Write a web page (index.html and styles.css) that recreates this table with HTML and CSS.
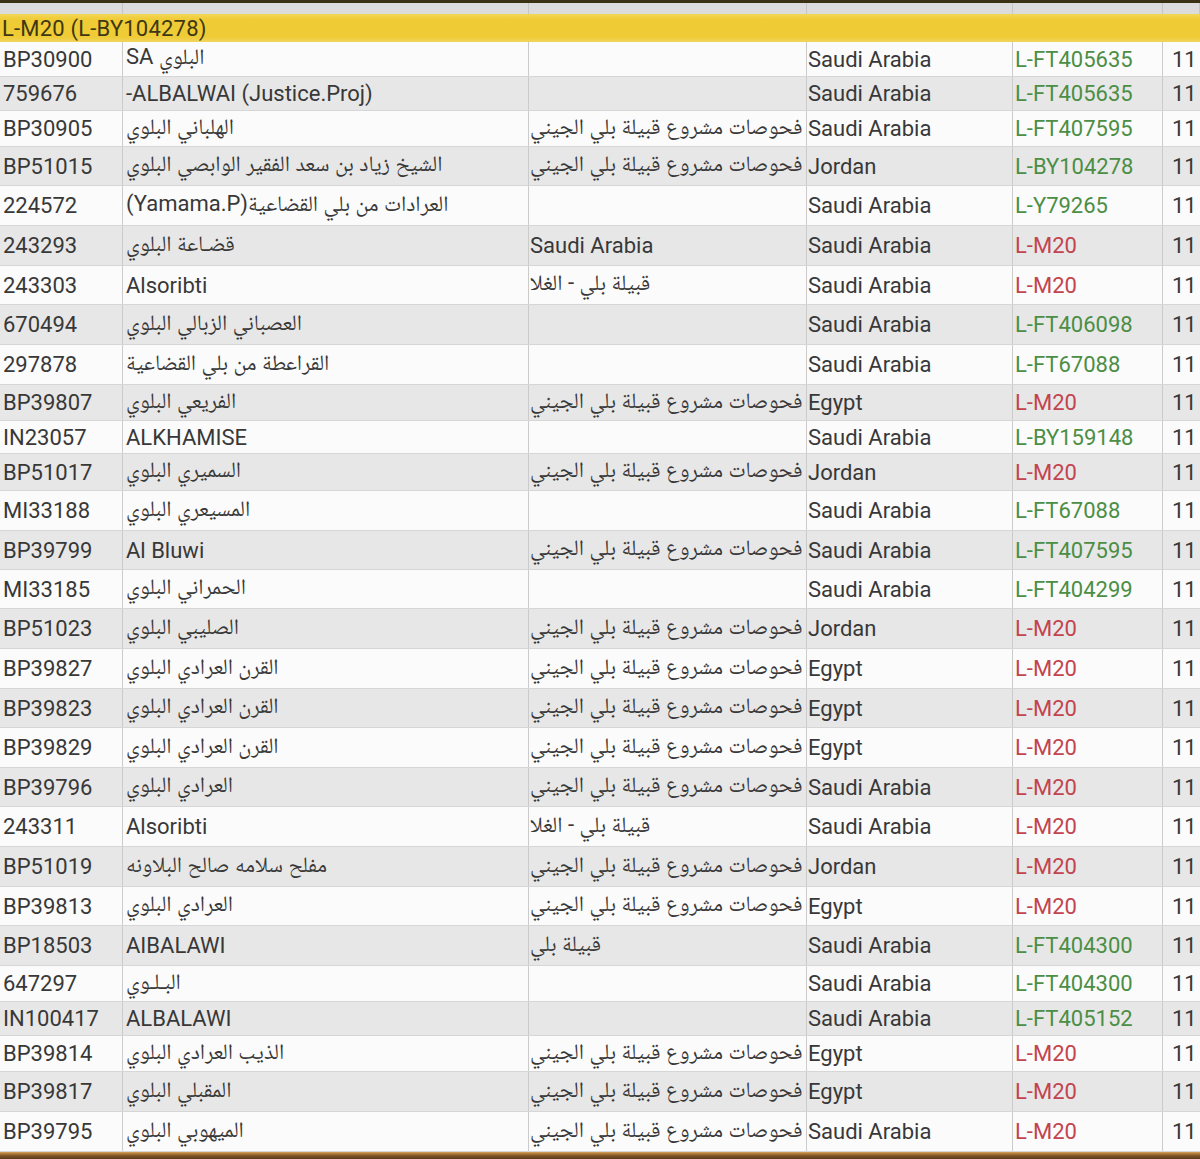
FILE: index.html
```html
<!DOCTYPE html>
<html lang="ar">
<head>
<meta charset="utf-8">
<title>L-M20</title>
<link rel="stylesheet" href="styles.css">
</head>
<body>
<div class="sheet">
  <div class="topbar"></div>
  <div class="grid head"><div class="c"></div><div class="c"></div><div class="c"></div><div class="c"></div><div class="c"></div><div class="c"></div></div>
  <div class="group">L-M20 (L-BY104278)</div>

  <div class="grid row h35"><div class="c id">BP30900</div><div class="c name">SA البلوي</div><div class="c note"></div><div class="c country">Saudi Arabia</div><div class="c hap g">L-FT405635</div><div class="c n">11</div></div>
  <div class="grid row alt h34"><div class="c id">759676</div><div class="c name">-ALBALWAI (Justice.Proj)</div><div class="c note"></div><div class="c country">Saudi Arabia</div><div class="c hap g">L-FT405635</div><div class="c n">11</div></div>
  <div class="grid row h36"><div class="c id">BP30905</div><div class="c name">الهلباني البلوي</div><div class="c note">فحوصات مشروع قبيلة بلي الجيني</div><div class="c country">Saudi Arabia</div><div class="c hap g">L-FT407595</div><div class="c n">11</div></div>
  <div class="grid row alt h39"><div class="c id">BP51015</div><div class="c name">الشيخ زياد بن سعد الفقير الوابصي البلوي</div><div class="c note">فحوصات مشروع قبيلة بلي الجيني</div><div class="c country">Jordan</div><div class="c hap g">L-BY104278</div><div class="c n">11</div></div>
  <div class="grid row"><div class="c id">224572</div><div class="c name">(Yamama.P)العرادات من بلي القضاعية</div><div class="c note"></div><div class="c country">Saudi Arabia</div><div class="c hap g">L-Y79265</div><div class="c n">11</div></div>
  <div class="grid row alt"><div class="c id">243293</div><div class="c name">قضـاعة البلوي</div><div class="c note">Saudi Arabia</div><div class="c country">Saudi Arabia</div><div class="c hap r">L-M20</div><div class="c n">11</div></div>
  <div class="grid row h39"><div class="c id">243303</div><div class="c name">Alsoribti</div><div class="c note">قبيلة بلي - الغلا</div><div class="c country">Saudi Arabia</div><div class="c hap r">L-M20</div><div class="c n">11</div></div>
  <div class="grid row alt"><div class="c id">670494</div><div class="c name">العصباني الزبالي البلوي</div><div class="c note"></div><div class="c country">Saudi Arabia</div><div class="c hap g">L-FT406098</div><div class="c n">11</div></div>
  <div class="grid row"><div class="c id">297878</div><div class="c name">القراعطة من بلي القضاعية</div><div class="c note"></div><div class="c country">Saudi Arabia</div><div class="c hap g">L-FT67088</div><div class="c n">11</div></div>
  <div class="grid row alt h36"><div class="c id">BP39807</div><div class="c name">الفريعي البلوي</div><div class="c note">فحوصات مشروع قبيلة بلي الجيني</div><div class="c country">Egypt</div><div class="c hap r">L-M20</div><div class="c n">11</div></div>
  <div class="grid row h33"><div class="c id">IN23057</div><div class="c name">ALKHAMISE</div><div class="c note"></div><div class="c country">Saudi Arabia</div><div class="c hap g">L-BY159148</div><div class="c n">11</div></div>
  <div class="grid row alt h37"><div class="c id">BP51017</div><div class="c name">السميري البلوي</div><div class="c note">فحوصات مشروع قبيلة بلي الجيني</div><div class="c country">Jordan</div><div class="c hap r">L-M20</div><div class="c n">11</div></div>
  <div class="grid row"><div class="c id">MI33188</div><div class="c name">المسيعري البلوي</div><div class="c note"></div><div class="c country">Saudi Arabia</div><div class="c hap g">L-FT67088</div><div class="c n">11</div></div>
  <div class="grid row alt h39"><div class="c id">BP39799</div><div class="c name">Al Bluwi</div><div class="c note">فحوصات مشروع قبيلة بلي الجيني</div><div class="c country">Saudi Arabia</div><div class="c hap g">L-FT407595</div><div class="c n">11</div></div>
  <div class="grid row h39"><div class="c id">MI33185</div><div class="c name">الحمراني البلوي</div><div class="c note"></div><div class="c country">Saudi Arabia</div><div class="c hap g">L-FT404299</div><div class="c n">11</div></div>
  <div class="grid row alt"><div class="c id">BP51023</div><div class="c name">الصليبي البلوي</div><div class="c note">فحوصات مشروع قبيلة بلي الجيني</div><div class="c country">Jordan</div><div class="c hap r">L-M20</div><div class="c n">11</div></div>
  <div class="grid row"><div class="c id">BP39827</div><div class="c name">القرن العرادي البلوي</div><div class="c note">فحوصات مشروع قبيلة بلي الجيني</div><div class="c country">Egypt</div><div class="c hap r">L-M20</div><div class="c n">11</div></div>
  <div class="grid row alt h39"><div class="c id">BP39823</div><div class="c name">القرن العرادي البلوي</div><div class="c note">فحوصات مشروع قبيلة بلي الجيني</div><div class="c country">Egypt</div><div class="c hap r">L-M20</div><div class="c n">11</div></div>
  <div class="grid row"><div class="c id">BP39829</div><div class="c name">القرن العرادي البلوي</div><div class="c note">فحوصات مشروع قبيلة بلي الجيني</div><div class="c country">Egypt</div><div class="c hap r">L-M20</div><div class="c n">11</div></div>
  <div class="grid row alt h39"><div class="c id">BP39796</div><div class="c name">العرادي البلوي</div><div class="c note">فحوصات مشروع قبيلة بلي الجيني</div><div class="c country">Saudi Arabia</div><div class="c hap r">L-M20</div><div class="c n">11</div></div>
  <div class="grid row"><div class="c id">243311</div><div class="c name">Alsoribti</div><div class="c note">قبيلة بلي - الغلا</div><div class="c country">Saudi Arabia</div><div class="c hap r">L-M20</div><div class="c n">11</div></div>
  <div class="grid row alt"><div class="c id">BP51019</div><div class="c name">مفلح سلامه صالح البلاونه</div><div class="c note">فحوصات مشروع قبيلة بلي الجيني</div><div class="c country">Jordan</div><div class="c hap r">L-M20</div><div class="c n">11</div></div>
  <div class="grid row h39"><div class="c id">BP39813</div><div class="c name">العرادي البلوي</div><div class="c note">فحوصات مشروع قبيلة بلي الجيني</div><div class="c country">Egypt</div><div class="c hap r">L-M20</div><div class="c n">11</div></div>
  <div class="grid row alt"><div class="c id">BP18503</div><div class="c name">AIBALAWI</div><div class="c note">قبيلة بلي</div><div class="c country">Saudi Arabia</div><div class="c hap g">L-FT404300</div><div class="c n">11</div></div>
  <div class="grid row h36"><div class="c id">647297</div><div class="c name">البـلـوي</div><div class="c note"></div><div class="c country">Saudi Arabia</div><div class="c hap g">L-FT404300</div><div class="c n">11</div></div>
  <div class="grid row alt h34"><div class="c id">IN100417</div><div class="c name">ALBALAWI</div><div class="c note"></div><div class="c country">Saudi Arabia</div><div class="c hap g">L-FT405152</div><div class="c n">11</div></div>
  <div class="grid row h36"><div class="c id">BP39814</div><div class="c name">الذيب العرادي البلوي</div><div class="c note">فحوصات مشروع قبيلة بلي الجيني</div><div class="c country">Egypt</div><div class="c hap r">L-M20</div><div class="c n">11</div></div>
  <div class="grid row alt"><div class="c id">BP39817</div><div class="c name">المقبلي البلوي</div><div class="c note">فحوصات مشروع قبيلة بلي الجيني</div><div class="c country">Egypt</div><div class="c hap r">L-M20</div><div class="c n">11</div></div>
  <div class="grid row"><div class="c id">BP39795</div><div class="c name">الميهوبي البلوي</div><div class="c note">فحوصات مشروع قبيلة بلي الجيني</div><div class="c country">Saudi Arabia</div><div class="c hap r">L-M20</div><div class="c n">11</div></div>

  <div class="bottombar"></div>
</div>
</body>
</html>
```

FILE: styles.css
```css
html, body {
  margin: 0;
  padding: 0;
  background: #ffffff;
}

.sheet {
  width: 1200px;
  height: 1159px;
  overflow: hidden;
  display: flex;
  flex-direction: column;
  font-family: Roboto, "Noto Naskh Arabic", "Noto Sans Arabic", "DejaVu Sans", sans-serif;
  font-size: 22px;
  color: #383838;
  direction: ltr;
}

.topbar {
  height: 3px;
  flex: none;
  background: #3a3114;
}

.grid {
  display: grid;
  grid-template-columns: 123px 406px 278px 206px 150px 37px;
  box-sizing: border-box;
  flex: none;
}

.head {
  height: 11px;
  background: #dcdcdc;
}

.head .c {
  border-right: 1px solid #c6c6c6;
}

.group {
  height: 28px;
  flex: none;
  box-sizing: border-box;
  padding-left: 2px;
  display: flex;
  align-items: center;
  background: linear-gradient(#f1d75a 0%, #efcb36 18%, #efcb36 82%, #f1d560 100%);
  color: #3e3713;
  letter-spacing: 0.2px;
}

.row {
  height: 40px;
  background: #fbfbfb;
  border-bottom: 1px solid #d6d6d6;
}

.row.alt {
  background: #e7e7e7;
}

.row.h33 { height: 33px; }
.row.h34 { height: 34px; }
.row.h35 { height: 35px; }
.row.h36 { height: 36px; }
.row.h37 { height: 37px; }
.row.h39 { height: 39px; }

.c {
  box-sizing: border-box;
  border-right: 1px solid #cbcbcb;
  display: flex;
  align-items: center;
  white-space: nowrap;
  overflow: hidden;
}

.c.n {
  border-right: none;
  padding-left: 9px;
}

.id {
  padding-left: 3px;
}

.name {
  padding-left: 3px;
}

.note {
  padding-left: 1px;
}

.country {
  padding-left: 1px;
}

.hap {
  padding-left: 2px;
}

.hap.g {
  color: #4b8e44;
}

.hap.r {
  color: #c2444e;
}

.bottombar {
  flex: 1;
  min-height: 6px;
  background: linear-gradient(#d4a460 0px, #a8732f 2px, #7a5224 4px, #5a3c1a 100%);
}
```
